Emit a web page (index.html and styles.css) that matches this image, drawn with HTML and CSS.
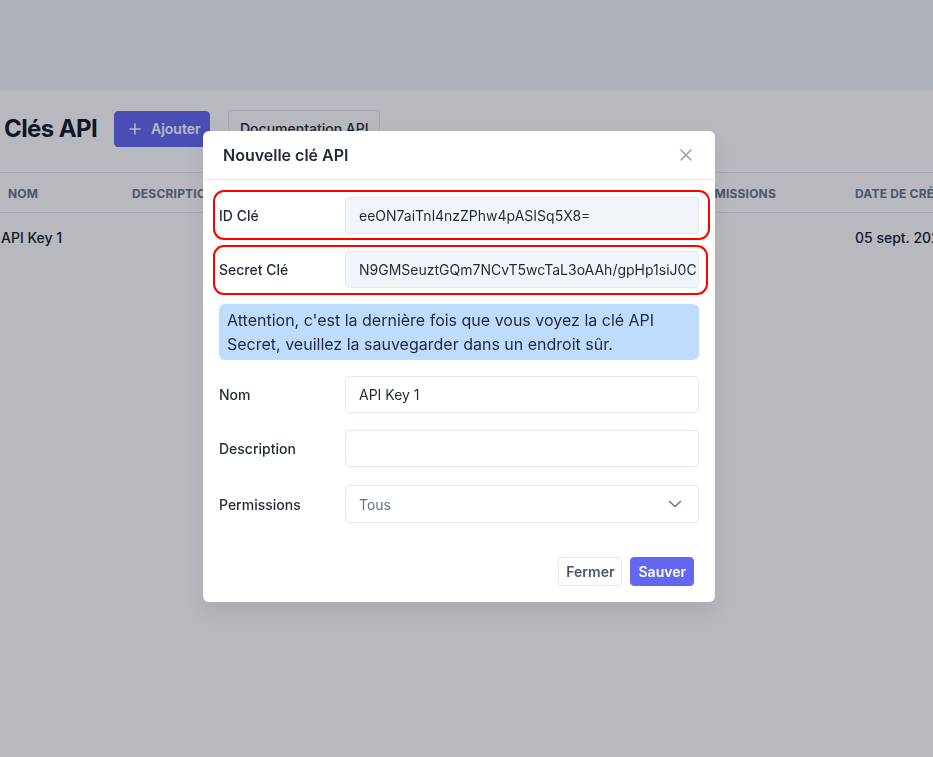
FILE: index.html
```html
<!DOCTYPE html>
<html lang="fr">
<head>
    <meta charset="UTF-8">
    <meta name="viewport" content="width=device-width, initial-scale=1.0">
    <title>Clés API</title>
    <link rel="stylesheet" href="styles.css">
</head>
<body>
    <div class="topbar"></div>

    <main class="page">
        <div class="page-head">
            <h1 class="page-title">Clés API</h1>
            <button class="btn btn-primary btn-add">
                <svg width="12" height="12" viewBox="0 0 12 12"><path d="M6 1v10M1 6h10" stroke="currentColor" stroke-width="1.5" stroke-linecap="round"/></svg>
                Ajouter
            </button>
            <button class="btn btn-outline btn-doc">Documentation API</button>
        </div>

        <div class="table">
            <div class="table-row table-head">
                <div class="cell">Nom</div>
                <div class="cell">Description</div>
                <div class="cell">Permissions</div>
                <div class="cell">Date de création</div>
            </div>
            <div class="table-row table-body">
                <div class="cell cell-first">API Key 1</div>
                <div class="cell"></div>
                <div class="cell"></div>
                <div class="cell">05 sept. 2024</div>
            </div>
        </div>
    </main>

    <!-- fenêtre modale -->
    <div class="overlay">
        <div class="modal">
            <div class="modal-header">
                <h2 class="modal-title">Nouvelle clé API</h2>
                <svg class="modal-close" width="14" height="14" viewBox="0 0 14 14"><path d="M2 2l10 10M12 2L2 12" stroke="currentColor" stroke-width="1.6" stroke-linecap="round"/></svg>
            </div>

            <div class="modal-body">
                <div class="field field-marked">
                    <label class="field-label">ID Clé</label>
                    <div class="input input-disabled">eeON7aiTnl4nzZPhw4pASISq5X8=</div>
                </div>
                <div class="field field-marked field-marked-2">
                    <label class="field-label">Secret Clé</label>
                    <div class="input input-disabled">N9GMSeuztGQm7NCvT5wcTaL3oAAh/gpHp1siJ0C</div>
                </div>

                <div class="alert">Attention, c'est la dernière fois que vous voyez la clé API Secret, veuillez la sauvegarder dans un endroit sûr.</div>

                <div class="field field-plain">
                    <label class="field-label">Nom</label>
                    <div class="input">API Key 1</div>
                </div>
                <div class="field field-plain field-desc">
                    <label class="field-label">Description</label>
                    <div class="input"></div>
                </div>
                <div class="field field-plain field-perm">
                    <label class="field-label">Permissions</label>
                    <div class="input select">
                        <span class="select-value">Tous</span>
                        <svg width="14" height="8" viewBox="0 0 14 8"><path d="M1.5 1.5l5.5 5 5.5-5" fill="none" stroke="currentColor" stroke-width="1.5" stroke-linecap="round" stroke-linejoin="round"/></svg>
                    </div>
                </div>
            </div>

            <div class="modal-footer">
                <button class="btn btn-outline btn-sm">Fermer</button>
                <button class="btn btn-primary btn-sm">Sauver</button>
            </div>
        </div>
    </div>
</body>
</html>
```

FILE: styles.css
```css
* {
    margin: 0;
    padding: 0;
    box-sizing: border-box;
}

html, body {
    height: 100%;
    width: 100%;
    overflow: hidden;
    font-family: Inter, 'Noto Sans', sans-serif;
    background-color: #ffffff;
    color: #111827;
}

.topbar {
    height: 90px;
    background-color: #f1f4f9;
}

.page {
    padding-top: 20px;
    overflow: hidden;
}

.page-head {
    display: flex;
    align-items: center;
    height: 37px;
    padding-left: 4px;
}

.page-title {
    font-size: 24px;
    font-weight: 700;
    color: #111827;
    letter-spacing: -0.6px;
    width: 110px;
}

.btn {
    font-family: inherit;
    font-size: 14px;
    font-weight: 600;
    border-radius: 4px;
    cursor: pointer;
    display: inline-flex;
    align-items: center;
    white-space: nowrap;
}

.btn-primary {
    background-color: #6366f1;
    color: #ffffff;
    border: 1px solid #6366f1;
}

.btn-outline {
    background-color: #ffffff;
    color: #475569;
    border: 1px solid #e2e8f0;
}

.btn-add {
    height: 36px;
    width: 96px;
    padding-left: 14px;
    gap: 10px;
}

.btn-doc {
    height: 38px;
    margin-left: 18px;
    padding: 0 11px;
    font-weight: 500;
    color: #1f2937;
    width: 152px;
}

.table {
    margin-top: 25px;
}

.table-row {
    display: grid;
    grid-template-columns: 124px 559px 164px 200px;
}

.table-head {
    height: 41px;
    align-items: center;
    border-top: 1px solid #e5e7eb;
    border-bottom: 1px solid #e5e7eb;
    font-size: 12px;
    font-weight: 700;
    color: #64748b;
    text-transform: uppercase;
    letter-spacing: 0.2px;
}

.table-head .cell,
.table-body .cell {
    padding-left: 8px;
    padding-top: 1px;
    white-space: nowrap;
}

.table-body {
    height: 48px;
    align-items: center;
    font-size: 14px;
    font-weight: 500;
    color: #111827;
}

.table-body .cell-first {
    padding-left: 1px;
}

/* fenêtre modale */
.overlay {
    position: fixed;
    inset: 0;
    background-color: rgba(17, 24, 39, 0.3);
    display: flex;
    justify-content: center;
    align-items: flex-start;
    padding-top: 131px;
    padding-right: 15px;
}

.modal {
    width: 512px;
    background-color: #ffffff;
    border-radius: 6px;
    box-shadow: 0 10px 20px rgba(0, 0, 0, 0.08);
}

.modal-header {
    height: 49px;
    padding: 0 22px 0 20px;
    border-bottom: 1px solid #e5e7eb;
    display: flex;
    align-items: center;
    justify-content: space-between;
}

.modal-title {
    font-size: 16px;
    font-weight: 600;
    color: #1f2937;
}

.modal-close {
    color: #94a3b8;
}

.modal-body {
    padding: 10px 16px 0 16px;
}

.field {
    display: flex;
    align-items: center;
}

.field-label {
    width: 126px;
    font-size: 14px;
    font-weight: 500;
    color: #1f2937;
}

.field-marked {
    border: 2px solid #ff0000;
    border-radius: 11px;
    margin: 0 -11px 0 -6px;
    padding: 5px 9px 4px 4px;
}

.field-marked-2 {
    margin-top: 5px;
    margin-right: -9px;
    padding: 4px 7px 5px 4px;
}

.field-plain {
    margin-top: 16px;
}

.field-desc {
    margin-top: 17px;
}

.field-perm {
    margin-top: 18px;
}

.input {
    flex: 1;
    height: 37px;
    border: 1px solid #e2e8f0;
    border-radius: 4px;
    background-color: #ffffff;
    padding-left: 13px;
    display: flex;
    align-items: center;
    font-size: 14px;
    color: #1f2937;
    white-space: nowrap;
    overflow: hidden;
}

.input-disabled {
    background-color: #f1f5f9;
}

.select {
    height: 38px;
    justify-content: space-between;
    padding-right: 16px;
    color: #64748b;
}

.alert {
    margin-top: 9px;
    background-color: #bfdbfe;
    border-radius: 6px;
    padding: 4px 8px;
    font-size: 16px;
    line-height: 24px;
    color: #1f2937;
}

.modal-footer {
    display: flex;
    justify-content: flex-end;
    gap: 8px;
    padding: 34px 21px 16px 0;
}

.btn-sm {
    height: 29px;
    padding: 0 7px;
}
```
